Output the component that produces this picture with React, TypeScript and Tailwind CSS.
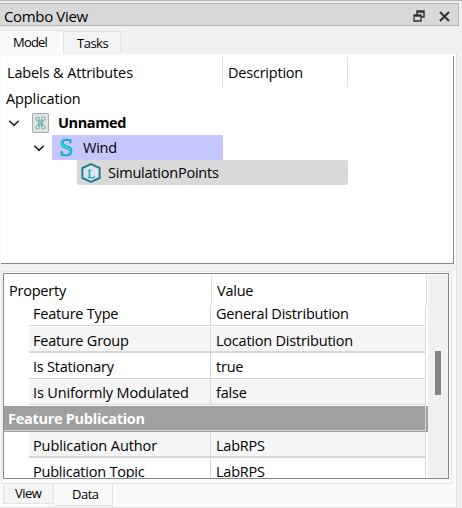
import React from "react";

const COLS = "grid grid-cols-[25px_181px_1px_214px_1px] shrink-0";

function Row({ name, value, height, tone, line, nameClass = "" }: { name: string; value: string; height: string; tone: string; line: string; nameClass?: string }) {
  return (
    <div className={`${COLS} ${height}`}>
      <div />
      <div className={`overflow-hidden pl-1 ${tone} ${line} ${nameClass}`}>{name}</div>
      <div className="bg-[#d7d7d7]" />
      <div className={`overflow-hidden pl-[5px] ${tone} ${line}`}>{value}</div>
      <div className="bg-[#d7d7d7]" />
    </div>
  );
}

function Chevron() {
  return (
    <svg className="h-3 w-3 shrink-0" viewBox="0 0 12 12" fill="none" stroke="#222" strokeWidth="1.6">
      <path d="M1.3 3.7 6 8.4l4.7-4.7" />
    </svg>
  );
}

function DocumentIcon() {
  return (
    <svg className="h-[20px] w-[17px] shrink-0" viewBox="0 0 17 20">
      <rect x=".5" y=".5" width="16" height="19" rx=".5" fill="#e2e2e2" stroke="#aaa" />
      <g fill="none" stroke="#67aaa9" strokeWidth="1">
        <circle cx="5.6" cy="5.8" r="1.8" />
        <circle cx="11.4" cy="5.8" r="1.8" />
        <circle cx="5.6" cy="14.2" r="1.8" />
        <circle cx="11.4" cy="14.2" r="1.8" />
        <path d="m6.5 7.5 4 5.5m0-5.5-4 5.5M6.5 8h4v4.2h-4z" />
      </g>
    </svg>
  );
}

function WindIcon() {
  return (
    <svg className="h-5 w-4 shrink-0" viewBox="0 0 16 20">
      <text x="8" y="18" textAnchor="middle" fontFamily="Liberation Serif, serif" fontSize="25" fill="#00f5f5" stroke="#12869a" strokeWidth=".7">S</text>
    </svg>
  );
}

function PointsIcon() {
  return (
    <svg className="h-5 w-5 shrink-0" viewBox="0 0 20 20">
      <path d="M10 1.2 18.6 5v10L10 18.8 1.4 15V5z" fill="#dde6e9" stroke="#247f96" strokeWidth="2" />
      <text x="10" y="14.5" textAnchor="middle" fontFamily="Liberation Serif, serif" fontSize="13" fill="#18a5b5" stroke="#18a5b5" strokeWidth=".3">L</text>
    </svg>
  );
}

export default function App() {
  return (
    <div className="flex h-[508px] w-[462px] flex-col overflow-hidden bg-[#f0f0f0] font-['Open_Sans','Noto_Sans',sans-serif] text-[14.5px] leading-[24px] tracking-[-0.22px] whitespace-nowrap text-black">
      <div className="h-px shrink-0 bg-[#b5b5b5]" />
      <header className="mt-[2px] flex h-[23px] w-[459px] shrink-0 items-center border-y border-r border-[#b4b4b4] bg-[#d9d9d9] pl-[4px]">
        <span className="mt-[3px] text-[15px] tracking-[-0.35px]">Combo View</span>
        <svg className="mt-[3px] ml-auto h-3 w-3" viewBox="0 0 12 12" fill="none" stroke="#333">
          <path d="M4 5V1h7v6H8M4 2h7" strokeWidth="1.5" />
          <path d="M1 5h7v6H1zM1 6h7" strokeWidth="1.3" />
        </svg>
        <svg className="mt-[3px] mr-[8px] ml-[14px] h-[11px] w-[11px]" viewBox="0 0 11 11" stroke="#333" strokeWidth="2.2">
          <path d="m1 1 9 9m0-9-9 9" />
        </svg>
      </header>

      <div className="flex h-[28px] shrink-0 items-end text-[13px] leading-[22px] tracking-[-0.5px]">
        <div className="h-6 w-[64px] border-t border-r border-[#e3e3e3] bg-[#fafafa] pl-[13px] tracking-[-0.8px]">Model</div>
        <div className="mb-px h-[22px] w-[57px] border-t border-r border-[#e3e3e3] bg-[#f3f3f3] pl-[13px]">Tasks</div>
      </div>

      <main className="flex min-h-0 w-[457px] flex-1 flex-col border-r border-[#e3e3e3] bg-[#fafafa]">
        <section className="mt-[2px] ml-px flex h-[208px] w-[453px] shrink-0 flex-col border-r border-b border-[#828790] bg-white">
          <div className="mt-px flex h-[30px] shrink-0 leading-[31px]">
            <div className="w-[222px] border-r border-[#dedede] pl-[6px] tracking-[-0.13px]">Labels &amp; Attributes</div>
            <div className="w-[125px] border-r border-[#dedede] pl-[5px]">Description</div>
          </div>
          <div className="h-[23px] pl-[5px] leading-[23px] tracking-[-0.1px]">Application</div>
          <div className="flex h-[25px] items-center pl-[7px]">
            <Chevron />
            <span className="ml-[12px] flex"><DocumentIcon /></span>
            <b className="ml-[9px] tracking-[-0.4px]">Unnamed</b>
          </div>
          <div className="flex h-[25px] items-center pl-[32px]">
            <Chevron />
            <div className="ml-[7px] flex h-full w-[171px] items-center bg-[#c6c6ff] pl-[6px]">
              <WindIcon />
              <span className="ml-[9px]">Wind</span>
            </div>
          </div>
          <div className="ml-[76px] flex h-[25px] w-[271px] items-center rounded-[2px] bg-[#d9d9d9] pl-1">
            <PointsIcon />
            <span className="ml-[7px]">SimulationPoints</span>
          </div>
        </section>

        <div className="h-[7px] shrink-0 bg-[#f0f0f0]" />
        <section className="ml-px h-[213px] w-[451px] shrink-0 border border-[#e3e3e3] bg-[#fafafa] pt-px pl-px">
          <div className="flex h-[206px] w-[446px] overflow-hidden border border-[#828790] bg-white">
            <div className="flex w-[424px] shrink-0 flex-col overflow-hidden">
              <div className="mt-px flex h-[30px] shrink-0 leading-[32px]">
                <div className="w-[208px] border-r border-[#dedede] pl-[5px]">Property</div>
                <div className="w-[215px] border-r border-[#dedede] pl-[5px]">Value</div>
              </div>
              <Row name="Feature Type" value="General Distribution" height="h-[21px]" tone="bg-white leading-[18px]" line="border-b border-[#d7d7d7]" />
              <div className="h-px shrink-0" />
              <Row name="Feature Group" value="Location Distribution" height="h-[26px]" tone="bg-[#f5f5f5] leading-[28px]" line="border-b-2 border-[#d7d7d7]" />
              <Row name="Is Stationary" value="true" height="h-[26px]" tone="bg-white leading-[28px]" line="border-b border-[#d7d7d7]" />
              <div className="h-px shrink-0" />
              <Row name="Is Uniformly Modulated" value="false" height="h-[25px]" tone="bg-[#f5f5f5] leading-[26px]" line="border-b border-[#d7d7d7]" nameClass="tracking-[-0.15px]" />
              <div className="h-px shrink-0" />
              <div className="h-[26px] w-[424px] shrink-0 border-b border-[#a0a0a0] bg-[#a0a0a0]">
                <div className="h-[25px] w-[422px] border-r border-b border-[#d7d7d7] pl-1 leading-[26px] font-bold tracking-[-0.28px] text-white">Feature Publication</div>
              </div>
              <Row name="Publication Author" value="LabRPS" height="h-[26px]" tone="bg-[#f5f5f5] leading-[28px]" line="border-b-2 border-[#d7d7d7]" nameClass="tracking-[-0.1px]" />
              <Row name="Publication Topic" value="LabRPS" height="h-[21px]" tone="bg-white leading-[28px]" line="" />
            </div>
            <div className="mt-px flex-1 bg-[#f0f0f0] pt-[76px] pl-[7px]">
              <div className="h-[44px] w-[6px] bg-[#858585]" />
            </div>
          </div>
        </section>
        <div className="ml-[3px] flex h-[23px] shrink-0 text-[13px] tracking-[-0.5px]">
          <div className="h-[20px] w-[51px] border-x border-b border-[#e3e3e3] bg-[#f3f3f3] pl-[11px] leading-[19px]">View</div>
          <div className="h-[22px] w-[59px] border-r border-b border-[#e3e3e3] bg-[#fafafa] pl-[18px] leading-[21px]">Data</div>
        </div>
        <div className="h-px bg-[#e3e3e3]" />
      </main>
    </div>
  );
}
